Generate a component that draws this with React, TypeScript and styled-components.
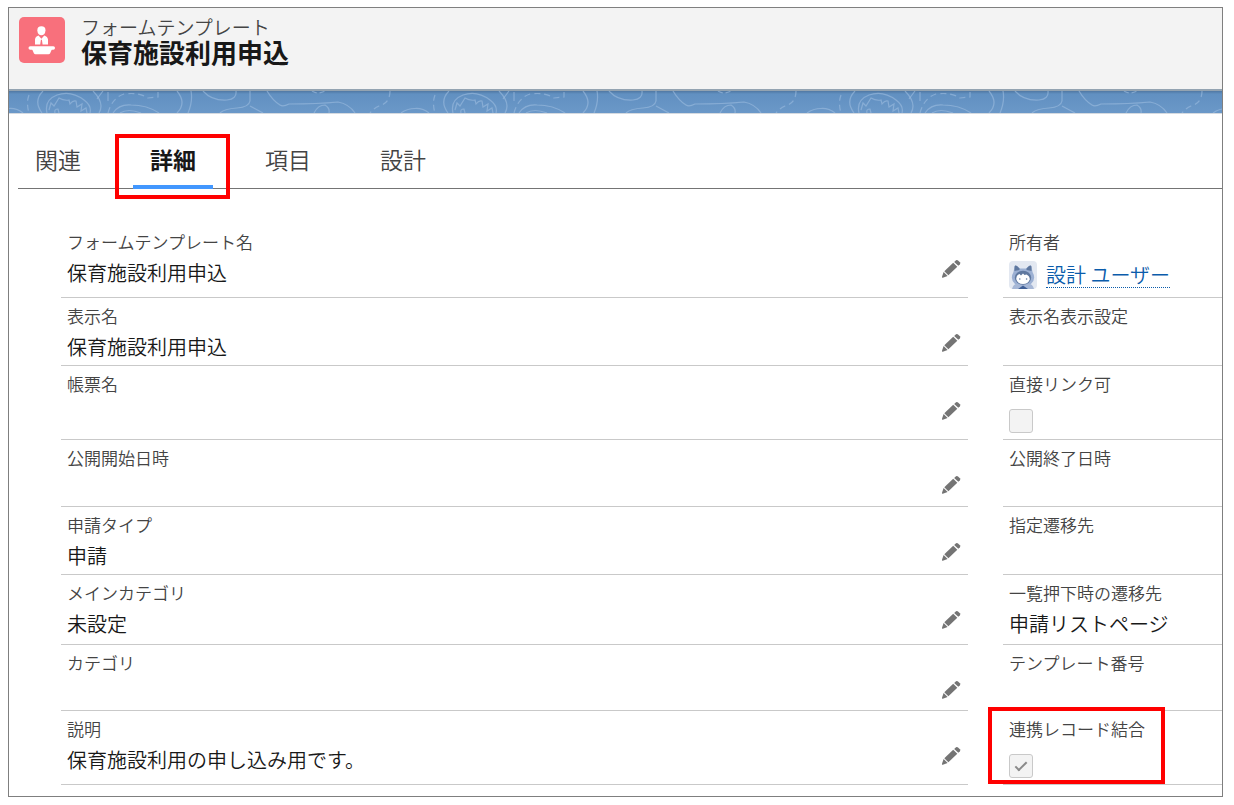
import React from "react";
import styled, { createGlobalStyle, css } from "styled-components";

const GlobalStyle = createGlobalStyle`
  *, *::before, *::after { box-sizing: border-box; }
  body {
    margin: 0;
    background: #fff;
    color: #181818;
    font-family: "Noto Sans CJK JP", "Noto Sans", sans-serif;
    font-size: 20px;
    font-weight: 350;
  }
  button { font: inherit; color: inherit; background: none; border: 0; padding: 0; cursor: pointer; }
`;

const Frame = styled.main`
  height: calc(100vh - 15px);
  margin: 7px 11px 8px 8px;
  border: 1px solid #7f7f7f;
  overflow: hidden;
`;

const Header = styled.header`
  display: flex;
  gap: 16px;
  height: 83px;
  padding: 9px 10px;
  background: #f3f3f3;
  border-bottom: 2px solid #93a3b1;
`;

const HeaderIcon = styled.svg`
  flex: none;
  width: 46px;
  height: 46px;
`;

const Titles = styled.div`
  display: flex;
  flex-direction: column;
`;

const ObjectName = styled.p`
  margin: 0;
  font-size: 19px;
  line-height: 20px;
  color: #444;
`;

const RecordName = styled.h1`
  margin: 0;
  font-size: 26px;
  line-height: 30px;
  font-weight: 700;
`;

const Band = styled.div`
  height: 23px;
  background: linear-gradient(#5078a3, #6190c1 3px, #6b98c8);
  border-bottom: 1px solid #d5dae0;

  svg { display: block; width: 100%; height: 22px; }
`;

const TabList = styled.div`
  display: flex;
  gap: 35px;
  margin-left: 9px;
  padding-top: 20px;
  border-bottom: 1px solid #747474;
`;

const Tab = styled.button<{ $active?: boolean }>`
  position: relative;
  width: 80px;
  height: 55px;
  margin-bottom: -1px;
  font-size: 23px;
  line-height: 51px;
  color: #444;
  border-bottom: 4px solid transparent;
  ${({ $active }) => $active && css`
    color: #181818;
    font-weight: 700;
    border-bottom-color: #4297fe;
  `}
`;

const Highlight = styled.span<{ $top: number; $right?: number; $bottom: number; $left: number; $width?: number }>`
  position: absolute;
  top: ${p => p.$top}px;
  bottom: ${p => p.$bottom}px;
  left: ${p => p.$left}px;
  ${p => (p.$width ? `width: ${p.$width}px;` : `right: ${p.$right}px;`)}
  border: 4px solid #ff0000;
  pointer-events: none;
`;

const Details = styled.section`
  display: grid;
  grid-template-columns: minmax(0, 907fr) minmax(0, 219fr);
  column-gap: 35px;
  padding: 35px 0 0 52px;
`;

const Field = styled.div<{ $height: number }>`
  position: relative;
  display: flex;
  justify-content: space-between;
  min-height: ${p => p.$height}px;
  padding: 6px 7px 0 6px;
  border-bottom: 1px solid #c9c9c9;
`;

const Pair = styled.div`
  display: flex;
  flex-direction: column;
  align-items: flex-start;
  gap: 4px;
  white-space: nowrap;
`;

const labelStyle = css`
  font-size: 17px;
  line-height: 24px;
  color: #444;
`;

const Label = styled.span`${labelStyle}`;
const CheckLabel = styled.label`${labelStyle}`;

const Value = styled.span`
  line-height: 30px;
`;

const Owner = styled.span`
  display: flex;
  align-items: center;
  gap: 9px;
  height: 34px;

  svg { width: 28px; height: 28px; }
`;

const OwnerLink = styled.a`
  line-height: 24px;
  color: #0b5cab;
  text-decoration: none;
  border-bottom: 1px dotted #0b5cab;
`;

const CheckBox = styled.input`
  appearance: none;
  position: relative;
  width: 24px;
  height: 24px;
  margin: 9px 0 0;
  background: #f3f3f3;
  border: 1px solid #c9c9c9;
  border-radius: 3px;

  &:checked::after {
    content: "";
    position: absolute;
    top: 7px;
    left: 5px;
    width: 12px;
    height: 6px;
    border: solid #8a8a8a;
    border-width: 0 0 2px 2px;
    transform: rotate(-45deg);
  }
`;

const EditButton = styled.button`
  align-self: flex-start;
  display: flex;
  margin-top: 29px;

  svg { width: 20px; height: 20px; }
`;

const Pencil = () => (
  <svg viewBox="0 0 20 20" fill="#747474" aria-hidden="true">
    <path d="M3.300 12.200 12.200 3.700 16.300 7.800 7.400 16.300z" />
    <path d="M13.200 2.900 15 1.300Q16 .5 17 1.400L18.900 3.300Q19.700 4.300 18.900 5.200L17.300 6.800z" />
    <path d="M2.600 13 6.600 17 1.800 18.700Q.8 18.900 1 17.800z" />
  </svg>
);

const Avatar = () => (
  <svg viewBox="0 0 28 28" aria-hidden="true">
    <rect width="28" height="28" rx="4" fill="#e3e8f1" />
    <path d="M5.500 6Q5.500 3.500 8 5L11 7.500H17L20 5Q22.500 3.500 22.500 6L23.500 11Q27.500 18 22 23H6Q.5 18 4.500 11Z" fill="#9cb0d3" />
    <path d="M5.600 5.500Q6 4 8 5L10.500 7.500V9L5.500 10ZM22.400 5.500Q22 4 20 5L17.500 7.500V9L22.500 10Z" fill="#5f789f" />
    <path d="M3 28Q4.500 22 10 23H18Q23.500 22 25 28Z" fill="#a6b7d6" />
    <ellipse cx="14" cy="16.800" rx="8.200" ry="7" fill="#5f789f" />
    <path d="M7.200 18Q7.300 14 10.500 13L12 14.500 14 12.500 15.500 14 17.500 13.500Q20.800 15 20.800 18.500Q19 23 14 23Q8.500 23 7.200 18Z" fill="#fff" />
    <circle cx="10.800" cy="18" r="0.800" fill="#5f789f" />
    <circle cx="17.600" cy="18" r="0.800" fill="#5f789f" />
    <path d="M9 28 14 24.500 19 28Z" fill="#3f5f96" />
  </svg>
);

const PodiumIcon = () => (
  <HeaderIcon viewBox="0 0 46 46" aria-hidden="true">
    <rect width="46" height="46" rx="5" fill="#f8707c" />
    <g fill="#fff">
      <path d="M18.300 13.500Q18.300 9.300 22.400 9.300T26.500 13.500Q26 18.300 22.400 18.300T18.300 13.500Z" />
      <path d="M16 27.500V22.500Q16.200 19.500 19.500 18.500L22.400 21.800 25.300 18.500Q28.700 19.500 29 22.500V27.500H23.600L22.900 22.800H21.900L21.200 27.500Z" />
      <rect x="9.500" y="29.300" width="26.500" height="3.500" rx="1.700" />
      <path d="M13 32H33L31 36.500Q30.600 37.300 29.600 37.300H16.400Q15.400 37.300 15 36.500Z" />
    </g>
  </HeaderIcon>
);

const Contours = () => (
  <svg aria-hidden="true">
    <defs>
      <pattern id="contours" width="406" height="22" patternUnits="userSpaceOnUse">
        <g fill="none" stroke="#9dbce0" strokeOpacity="0.6" strokeWidth="1.200">
          <path d="M0 17.500Q8 17 14 22M392 22Q398 17.500 406 17.500" />
          <path d="M20 4Q17 12 20 22" strokeDasharray="6 4" />
          <path d="M33 22Q24 10 34 0M84 0Q96 12 90 22" />
          <path d="M38 22Q35 9 48 4Q62 -1 75 9Q83 15 81 22" />
          <path d="M40 19 42 12 45 15 50 7Q55 10 60 9L61 13Q64 9 67 10L68 16 73 13 72 20 77 17 78 22M46 22Q45 18 49 18L50 22" />
          <path d="M94 0 88 8M99 1V10" />
          <path d="M99 22Q103 7 115 3Q130 1 139 7L149 6V1" strokeDasharray="6 4" />
          <path d="M104 22Q110 13 122 14Q138 14 150 22M111 22Q119 17 132 22" />
          <path d="M168 0Q178 12 168 22M182 0Q184 10 179 22" />
          <path d="M194 0Q203 10 218 9Q228 8 227 0M241 0V10Q240 16 228 17Q215 18 211 22M241 15 254 22" />
          <path d="M258 0Q264 10 271 14Q274 16 280 13Q309 13 329 11Q340 13 346 22M305 22Q309 14 316 14Q321 17 320 22" />
          <path d="M303 0Q309 4 316 0" strokeDasharray="5 3" />
          <path d="M381 0Q381 12 370 15Q365 17 361 22" strokeDasharray="6 4" />
        </g>
      </pattern>
    </defs>
    <rect width="100%" height="22" fill="url(#contours)" />
  </svg>
);

type Item = {
  label: string;
  value?: string;
  kind?: "owner" | "check";
  checked?: boolean;
  marked?: boolean;
};

const rows: { height: number; left: Item; right: Item }[] = [
  { height: 74, left: { label: "フォームテンプレート名", value: "保育施設利用申込" }, right: { label: "所有者", value: "設計 ユーザー", kind: "owner" } },
  { height: 68, left: { label: "表示名", value: "保育施設利用申込" }, right: { label: "表示名表示設定" } },
  { height: 74, left: { label: "帳票名" }, right: { label: "直接リンク可", kind: "check" } },
  { height: 67, left: { label: "公開開始日時" }, right: { label: "公開終了日時" } },
  { height: 68, left: { label: "申請タイプ", value: "申請" }, right: { label: "指定遷移先" } },
  { height: 70, left: { label: "メインカテゴリ", value: "未設定" }, right: { label: "一覧押下時の遷移先", value: "申請リストページ" } },
  { height: 66, left: { label: "カテゴリ" }, right: { label: "テンプレート番号" } },
  { height: 74, left: { label: "説明", value: "保育施設利用の申し込み用です。" }, right: { label: "連携レコード結合", kind: "check", checked: true, marked: true } },
];

function FieldContent({ item }: { item: Item }) {
  if (item.kind === "check") {
    return (
      <Pair>
        <CheckLabel htmlFor={item.label}>{item.label}</CheckLabel>
        <CheckBox id={item.label} type="checkbox" defaultChecked={item.checked} disabled />
      </Pair>
    );
  }
  return (
    <Pair>
      <Label>{item.label}</Label>
      {item.kind === "owner" ? (
        <Owner>
          <Avatar />
          <OwnerLink href="#owner">{item.value}</OwnerLink>
        </Owner>
      ) : (
        item.value && <Value>{item.value}</Value>
      )}
    </Pair>
  );
}

const tabs = ["関連", "詳細", "項目", "設計"];

export default function App() {
  return (
    <>
      <GlobalStyle />
      <Frame>
        <Header>
          <PodiumIcon />
          <Titles>
            <ObjectName>フォームテンプレート</ObjectName>
            <RecordName>保育施設利用申込</RecordName>
          </Titles>
        </Header>
        <Band>
          <Contours />
        </Band>
        <TabList role="tablist">
          {tabs.map(tab => (
            <Tab key={tab} role="tab" aria-selected={tab === "詳細"} $active={tab === "詳細"}>
              {tab}
              {tab === "詳細" && <Highlight $top={0} $right={-17} $bottom={-14} $left={-18} />}
            </Tab>
          ))}
        </TabList>
        <Details>
          {rows.map(({ height, left, right }) => (
            <React.Fragment key={left.label}>
              <Field $height={height}>
                <FieldContent item={left} />
                <EditButton aria-label={`${left.label}を編集`}>
                  <Pencil />
                </EditButton>
              </Field>
              <Field $height={height}>
                <FieldContent item={right} />
                {right.marked && <Highlight $top={-4} $bottom={0} $left={-15} $width={177} />}
              </Field>
            </React.Fragment>
          ))}
        </Details>
      </Frame>
    </>
  );
}
